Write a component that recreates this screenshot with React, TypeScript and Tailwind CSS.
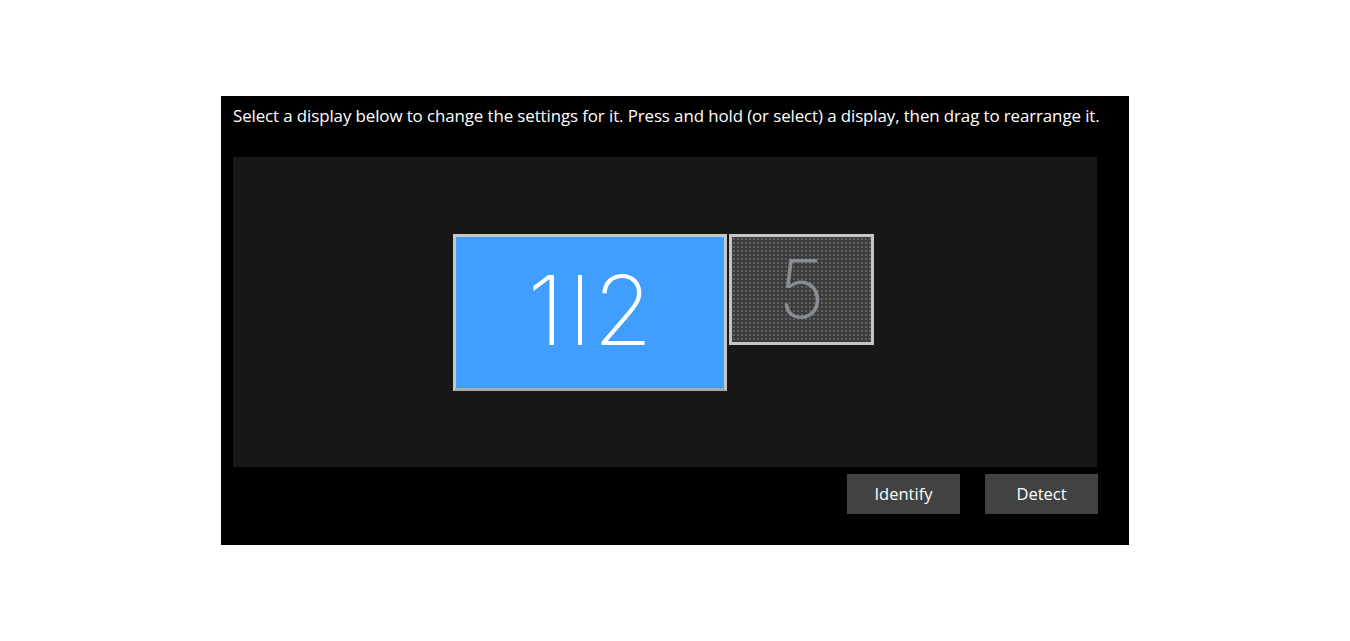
import React from "react";

export default function App() {
  return (
    <div className="min-h-[641px] w-[1350px] bg-white pt-[96px]" style={{ fontFamily: '"Open Sans", "Noto Sans", sans-serif' }}>
      <div className="ml-[221px] flex h-[449px] w-[908px] flex-col bg-black px-[12px]">
        <div className="h-[61px] pt-[7px] pl-[-1px] text-[16.9px] leading-[26px] whitespace-nowrap text-white tracking-[-0.1px]">
          Select a display below to change the settings for it. Press and hold (or select) a display, then drag to rearrange it.
        </div>
        <div className="relative h-[310px] w-[864px] bg-[#171717]">
          <div className="absolute left-[220px] top-[77px] flex h-[157px] w-[274px] items-center justify-center border-[3px] border-[#c6c6c6] border-b-[#a8a8a8] bg-[#409eff] pb-[5px]">
            <div className="flex items-baseline text-[96px] font-extralight leading-none text-white" style={{ fontFamily: 'Inter, sans-serif' }}>
              <span>1</span>
              <span className="ml-[14px] mr-[11px] inline-block h-[70px] w-[4px] bg-white" />
              <span>2</span>
            </div>
          </div>
          <div className="absolute left-[496px] top-[77px] flex h-[111px] w-[145px] items-center justify-center border-[3px] border-[#c6c6c6] bg-[#3c3c3c] bg-[radial-gradient(#777777_0.6px,transparent_0.9px)] bg-[length:4px_4px]">
            <span className="text-[81px] font-extralight leading-none text-[#878d93]" style={{ fontFamily: 'Inter, sans-serif' }}>5</span>
          </div>
        </div>
        <div className="flex w-[865px] justify-end gap-[25px] pt-[7px]">
          <button className="flex h-[40px] w-[113px] items-center justify-center bg-[#3a3a3a] bg-[radial-gradient(#555555_0.5px,transparent_0.8px)] bg-[length:2px_2px] text-[16.5px] text-white">
            Identify
          </button>
          <button className="flex h-[40px] w-[113px] items-center justify-center bg-[#3a3a3a] bg-[radial-gradient(#555555_0.5px,transparent_0.8px)] bg-[length:2px_2px] text-[16.5px] text-white">
            Detect
          </button>
        </div>
      </div>
    </div>
  );
}
